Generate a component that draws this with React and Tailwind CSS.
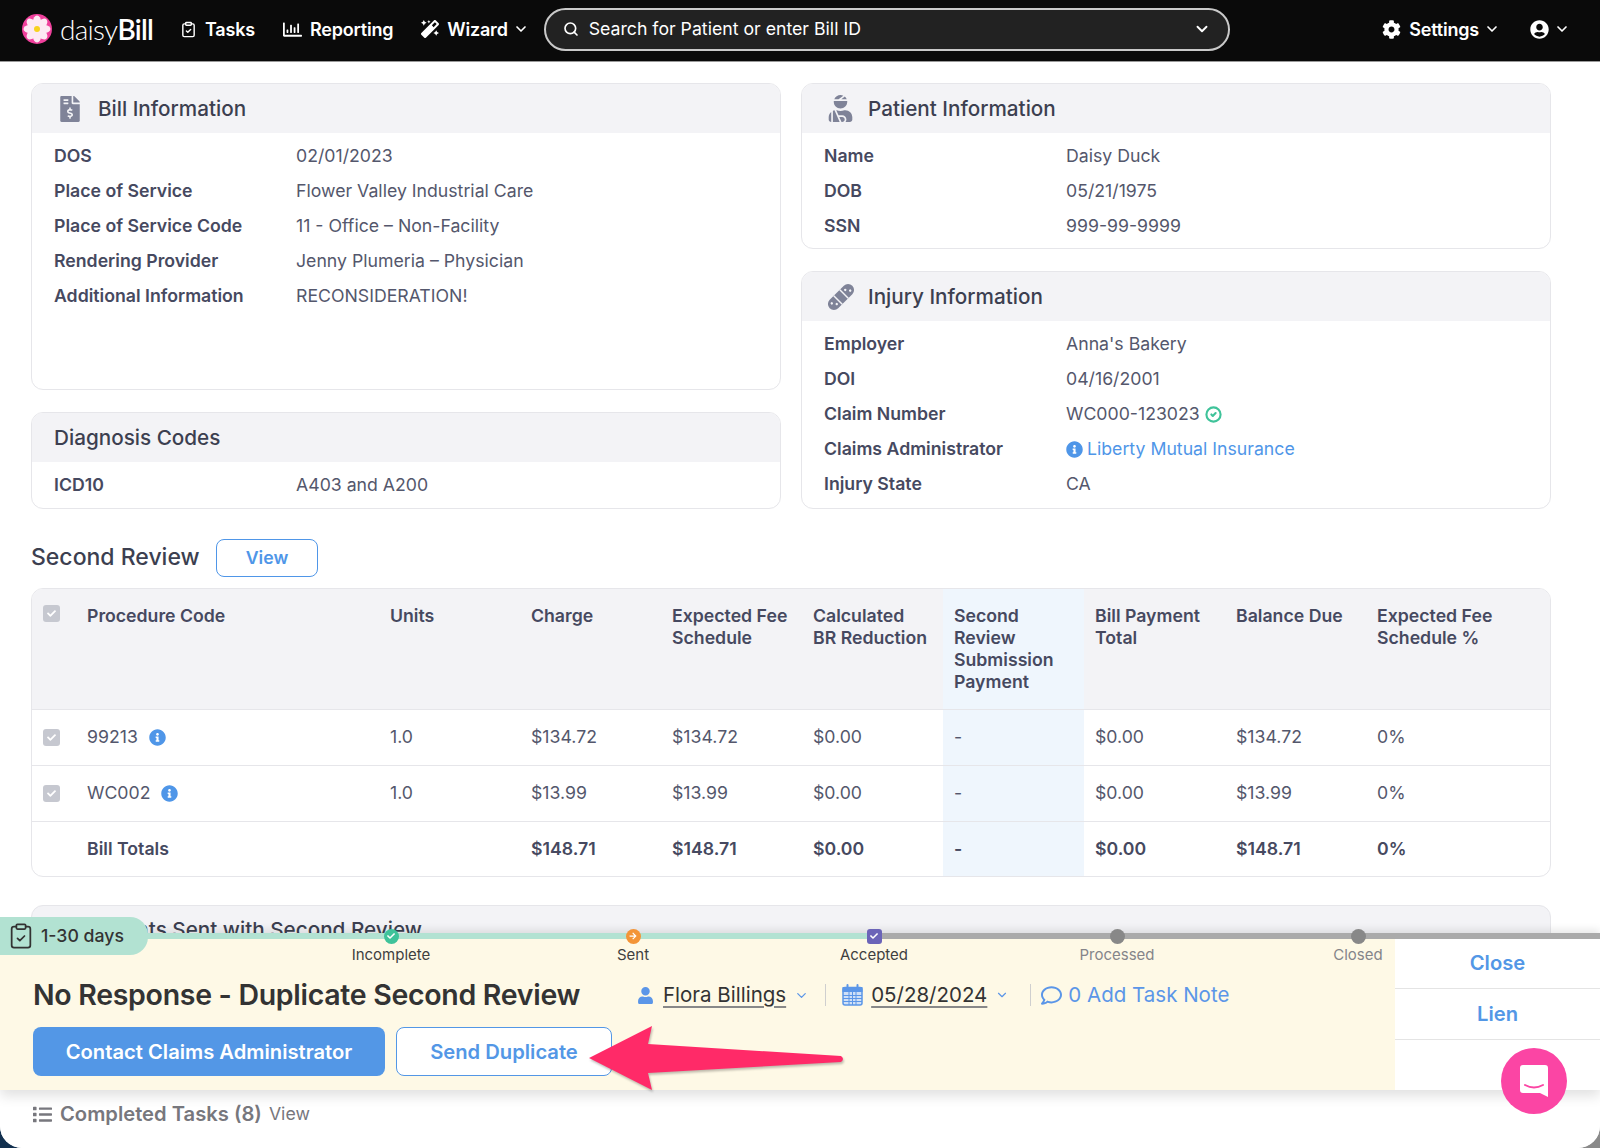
import { ChevronDown, Search, ClipboardCheck, CircleCheck } from "lucide-react";
import { FaCog, FaUserCircle, FaMagic, FaFileInvoiceDollar, FaUserInjured, FaUser, FaRegComment, FaList, FaInfoCircle, FaCheck, FaArrowRight, FaRegChartBar } from "react-icons/fa";

const billRows = [
  ["DOS", "02/01/2023"],
  ["Place of Service", "Flower Valley Industrial Care"],
  ["Place of Service Code", "11 - Office – Non-Facility"],
  ["Rendering Provider", "Jenny Plumeria – Physician"],
  ["Additional Information", "RECONSIDERATION!"],
];

const patientRows = [
  ["Name", "Daisy Duck"],
  ["DOB", "05/21/1975"],
  ["SSN", "999-99-9999"],
];

const procedureRows = [
  ["99213", "1.0", "$134.72", "$134.72", "$0.00", "-", "$0.00", "$134.72", "0%"],
  ["WC002", "1.0", "$13.99", "$13.99", "$0.00", "-", "$0.00", "$13.99", "0%"],
];

function Row({ label, children }) {
  return (
    <div className="flex h-[35px] items-center">
      <div className="w-[242px] font-semibold text-[#464960]">{label}</div>
      <div className="flex items-center text-[#54576c]">{children}</div>
    </div>
  );
}

function Card({ icon, title, className, children }) {
  return (
    <div className={"overflow-hidden rounded-xl border border-[#e6e6ea] bg-white " + className}>
      <div className="flex h-[49px] items-center bg-[#f3f3f6] px-[22px] text-[20.7px] font-medium text-[#3c3f50]">
        {icon && <div className="flex w-[44px] items-center justify-start pl-[3px] text-[#7f8398]">{icon}</div>}
        {title}
      </div>
      <div className="px-[22px] pt-[6px]">{children}</div>
    </div>
  );
}

function Check() {
  return (
    <div className="flex h-[17px] w-[17px] items-center justify-center rounded-[3px] bg-[#c6c8d0] text-white">
      <FaCheck size={9} />
    </div>
  );
}

function Logo() {
  return (
    <svg width="30" height="30" viewBox="0 0 30 30">
      <circle cx="15" cy="15" r="15" fill="#f0409c" />
      {[0, 45, 90, 135, 180, 225, 270, 315].map((a) => (
        <ellipse key={a} cx="15" cy="7.5" rx="4" ry="6" fill="#fde9f3" transform={`rotate(${a} 15 15)`} />
      ))}
      <circle cx="15" cy="15" r="3" fill="#f7d21e" />
    </svg>
  );
}

function BandageIcon() {
  return (
    <svg width="28" height="28" viewBox="0 0 28 28">
      <g transform="rotate(-45 14 14)">
        <rect x="-2" y="8" width="32" height="12" rx="6" fill="currentColor" />
        <rect x="9" y="8" width="1.5" height="12" fill="#f3f3f6" />
        <rect x="17.5" y="8" width="1.5" height="12" fill="#f3f3f6" />
        <circle cx="3" cy="12" r="1.2" fill="#f3f3f6" />
        <circle cx="6" cy="16" r="1.2" fill="#f3f3f6" />
        <circle cx="22" cy="12" r="1.2" fill="#f3f3f6" />
        <circle cx="25" cy="16" r="1.2" fill="#f3f3f6" />
      </g>
    </svg>
  );
}

function CalendarIcon() {
  return (
    <svg width="21" height="22" viewBox="0 0 21 22" className="mr-[8px] text-[#5b96e8]" stroke="currentColor" fill="none">
      <rect x="1" y="3.5" width="19" height="17.5" rx="2" fill="#cfe0f7" strokeWidth="1.5" />
      <rect x="1" y="3.5" width="19" height="4" fill="currentColor" strokeWidth="1" />
      <path d="M5.5 1v5M15.5 1v5" strokeWidth="2" strokeLinecap="round" />
      <path d="M7 8v13M10.5 8v13M14 8v13M1 11.5h19M1 14.5h19M1 17.5h19" strokeWidth="1" />
    </svg>
  );
}

function NavItem({ icon, children, caret }) {
  return (
    <div className="flex items-center gap-[8px] text-[18px] font-semibold tracking-[-0.2px] text-white">
      {icon}
      <span>{children}</span>
      {caret && <ChevronDown size={16} strokeWidth={2.5} className="-ml-[3px]" />}
    </div>
  );
}

function Milestone({ label, muted, children }) {
  return (
    <div className="flex w-[100px] flex-col items-center">
      <div className="flex h-[16px] items-center justify-center">{children}</div>
      <div className={"text-[15px] " + (muted ? "text-[#85858a]" : "text-[#3f3f3f]")}>{label}</div>
    </div>
  );
}

export default function App() {
  return (
    <div className="h-[1148px] w-[1600px] overflow-hidden bg-[linear-gradient(to_right,#12304f_50%,#8a8a8a_50%)] font-['Inter','Liberation_Sans',sans-serif] text-[17.7px]">
      <div className="relative h-[1148px] overflow-hidden rounded-b-[22px] bg-white">
        {/* top bar */}
        <div className="flex h-[62px] items-center border-b border-[#9a9a9a] bg-[#0a0a0a] pb-[3px] pl-[22px] pr-[30px]">
          <Logo />
          <div className="ml-[8px] w-[100px] font-['Lato',sans-serif] text-[28px] font-light tracking-tight text-white">
            daisy<span className="font-semibold">Bill</span>
          </div>
          <div className="ml-[20px] flex items-center gap-[28px]">
            <NavItem icon={<ClipboardCheck size={17} strokeWidth={2} />}>Tasks</NavItem>
            <NavItem icon={<FaRegChartBar size={19} />}>Reporting</NavItem>
            <NavItem icon={<FaMagic size={18} />} caret>Wizard</NavItem>
          </div>
          <div className="ml-[15px] flex h-[43px] w-[686px] items-center rounded-full border-2 border-[#c9c9c9] bg-[#222222] px-[17px] text-white">
            <Search size={16} strokeWidth={2.5} />
            <span className="ml-[10px] flex-1">Search for Patient or enter Bill ID</span>
            <ChevronDown size={18} strokeWidth={2.5} />
          </div>
          <div className="ml-auto flex items-center gap-[30px]">
            <NavItem icon={<FaCog size={19} />} caret>Settings</NavItem>
            <div className="flex items-center gap-[5px] text-white">
              <FaUserCircle size={19} />
              <ChevronDown size={16} strokeWidth={2.5} />
            </div>
          </div>
        </div>

        <div className="w-[1551px] pl-[31px] pt-[21px]">
          <div className="grid grid-cols-[750px_750px] gap-x-[20px]">
            <div className="flex flex-col gap-[22px]">
              <Card title="Bill Information" icon={<FaFileInvoiceDollar size={26} />} className="h-[307px]">
                {billRows.map((r) => (
                  <Row key={r[0]} label={r[0]}>{r[1]}</Row>
                ))}
              </Card>
              <Card title="Diagnosis Codes" className="h-[97px]">
                <Row label="ICD10">A403 and A200</Row>
              </Card>
            </div>
            <div className="flex flex-col gap-[22px]">
              <Card title="Patient Information" icon={<FaUserInjured size={27} />} className="h-[166px]">
                {patientRows.map((r) => (
                  <Row key={r[0]} label={r[0]}>{r[1]}</Row>
                ))}
              </Card>
              <Card title="Injury Information" icon={<BandageIcon />} className="h-[238px]">
                <Row label="Employer">Anna's Bakery</Row>
                <Row label="DOI">04/16/2001</Row>
                <Row label="Claim Number">
                  WC000-123023
                  <CircleCheck size={17} strokeWidth={3} className="ml-[5px] text-[#3fc39a]" />
                </Row>
                <Row label="Claims Administrator">
                  <FaInfoCircle size={17} className="mr-[4px] text-[#4f96e8]" />
                  <span className="text-[#4f96e8]">Liberty Mutual Insurance</span>
                </Row>
                <Row label="Injury State">CA</Row>
              </Card>
            </div>
          </div>

          <div className="mt-[30px] flex items-center">
            <div className="w-[185px] pb-[2px] text-[23px] font-medium text-[#3c3f50]">Second Review</div>
            <div className="flex h-[38px] w-[102px] items-center justify-center rounded-lg border border-[#4f96e8] font-semibold text-[#4f96e8]">
              View
            </div>
          </div>

          <div className="mt-[11px] overflow-hidden rounded-xl border border-[#e6e6ea] text-[#54576c]">
            <div className="grid h-[121px] grid-cols-[55px_303px_141px_141px_141px_141px_141px_141px_141px_1fr] border-b border-[#e6e6ea] bg-[#f3f3f6] font-semibold leading-[22px] text-[#464960]">
              <div className="pl-[11px] pt-[16px]"><Check /></div>
              <div className="pt-[16px]">Procedure Code</div>
              <div className="pt-[16px]">Units</div>
              <div className="pt-[16px]">Charge</div>
              <div className="pt-[16px]">Expected Fee<br />Schedule</div>
              <div className="pt-[16px]">Calculated<br />BR Reduction</div>
              <div className="-ml-[11px] mr-[11px] bg-[#eff6fd] pl-[11px] pt-[16px]">Second<br />Review<br />Submission<br />Payment</div>
              <div className="pt-[16px]">Bill Payment<br />Total</div>
              <div className="pt-[16px]">Balance Due</div>
              <div className="pt-[16px]">Expected Fee<br />Schedule %</div>
            </div>
            {procedureRows.map((r) => (
              <div key={r[0]} className="grid h-[56px] grid-cols-[55px_303px_141px_141px_141px_141px_141px_141px_141px_1fr] items-stretch border-b border-[#e6e6ea]">
                <div className="flex items-center pl-[11px]"><Check /></div>
                <div className="flex items-center gap-[11px]">
                  {r[0]}
                  <FaInfoCircle size={17} className="text-[#4f96e8]" />
                </div>
                {r.slice(1).map((v, i) => (
                  <div key={i} className={"flex items-center " + (i === 4 ? "-ml-[11px] mr-[11px] bg-[#eff6fd] pl-[11px]" : "")}>{v}</div>
                ))}
              </div>
            ))}
            <div className="grid h-[54px] grid-cols-[55px_303px_141px_141px_141px_141px_141px_141px_141px_1fr] items-stretch font-semibold text-[#464960]">
              <div />
              <div className="flex items-center">Bill Totals</div>
              <div />
              <div className="flex items-center">$148.71</div>
              <div className="flex items-center">$148.71</div>
              <div className="flex items-center">$0.00</div>
              <div className="-ml-[11px] mr-[11px] flex items-center bg-[#eff6fd] pl-[11px]">-</div>
              <div className="flex items-center">$0.00</div>
              <div className="flex items-center">$148.71</div>
              <div className="flex items-center">0%</div>
            </div>
          </div>

          <div className="mt-[28px] flex h-[49px] items-center rounded-t-xl border border-[#e6e6ea] bg-[#f3f3f6] px-[22px] text-[20.7px] font-medium text-[#3c3f50]">
            Documents Sent with Second Review
          </div>
        </div>

        {/* task bar pinned over the page */}
        <div className="absolute inset-x-0 bottom-0 h-[215px] bg-white shadow-[0_-3px_8px_rgba(0,0,0,0.1)]">
          <div className="absolute -top-[16px] left-0 z-10 flex h-[38px] w-[148px] items-center gap-[6px] rounded-r-[18px] bg-[#b2e2d2] pl-[7px] text-[#333]">
            <ClipboardCheck size={28} strokeWidth={1.5} />
            <span className="font-medium">1-30 days</span>
          </div>
          <div className="flex h-[6px]">
            <div className="w-[868px] bg-[#b2e2d2]" />
            <div className="flex-1 bg-[#aaaaaa]" />
          </div>
          <div className="flex h-[151px] shadow-[0_6px_12px_rgba(0,0,0,0.12)]">
            <div className="relative w-[1395px] bg-[#fef9e6] pl-[33px]">
              <div className="absolute -top-[11px] left-[341px] flex">
                <Milestone label="Incomplete">
                  <span className="flex h-[15px] w-[15px] items-center justify-center rounded-full bg-[#3fc39a] text-white"><FaCheck size={8} /></span>
                </Milestone>
                <div className="w-[142px]" />
                <Milestone label="Sent">
                  <span className="flex h-[15px] w-[15px] items-center justify-center rounded-full bg-[#f39437] text-white"><FaArrowRight size={8} /></span>
                </Milestone>
                <div className="w-[141px]" />
                <Milestone label="Accepted">
                  <span className="flex h-[15px] w-[15px] items-center justify-center rounded-[3px] bg-[#6b64b8] text-white"><FaCheck size={8} /></span>
                </Milestone>
                <div className="w-[143px]" />
                <Milestone label="Processed" muted>
                  <span className="h-[15px] w-[15px] rounded-full bg-[#888888]" />
                </Milestone>
                <div className="w-[141px]" />
                <Milestone label="Closed" muted>
                  <span className="h-[15px] w-[15px] rounded-full bg-[#888888]" />
                </Milestone>
              </div>
              <div className="flex h-[88px] items-center pt-[24px]">
                <div className="w-[604px] text-[28.5px] font-semibold tracking-[-0.3px] text-[#333333]">No Response - Duplicate Second Review</div>
                <div className="flex items-center text-[20.5px] text-[#333333]">
                  <FaUser size={17} className="mr-[9px] text-[#5b96e8]" />
                  <span className="underline decoration-[#888] underline-offset-4">Flora Billings</span>
                  <ChevronDown size={15} className="ml-[8px] text-[#5b96e8]" />
                  <div className="ml-[16px] mr-[16px] h-[22px] w-px bg-[#cfcfcf]" />
                  <CalendarIcon />
                  <span className="underline decoration-[#888] underline-offset-4">05/28/2024</span>
                  <ChevronDown size={14} className="ml-[8px] text-[#5b96e8]" />
                  <div className="ml-[21px] mr-[10px] h-[22px] w-px bg-[#cfcfcf]" />
                  <FaRegComment size={21} className="mr-[6px] text-[#5b96e8]" />
                  <span className="text-[#5b96e8]">0 Add Task Note</span>
                </div>
              </div>
              <div className="flex gap-[11px]">
                <div className="flex h-[49px] w-[352px] items-center justify-center rounded-lg bg-[#5397e6] pt-[1px] text-[20.2px] font-semibold text-white">
                  Contact Claims Administrator
                </div>
                <div className="flex h-[49px] w-[216px] items-center justify-center rounded-lg border border-[#5397e6] bg-white pt-[1px] text-[20.2px] font-semibold text-[#5397e6]">
                  Send Duplicate
                </div>
              </div>
            </div>
            <div className="flex-1 bg-white text-[20.2px] font-semibold text-[#5397e6]">
              <div className="flex h-[50px] items-center justify-center border-b border-[#e4e4e4]">Close</div>
              <div className="flex h-[51px] items-center justify-center border-b border-[#e4e4e4]">Lien</div>
            </div>
          </div>
          <div className="flex h-[48px] items-center pl-[33px] text-[#77777d]">
            <FaList size={19} className="mr-[8px]" />
            <span className="text-[20.2px] font-semibold">Completed Tasks (8)</span>
            <span className="ml-[7px]">View</span>
          </div>
        </div>

        {/* annotation arrow */}
        <svg className="absolute left-[585px] top-[1022px] drop-shadow-[1px_2px_1px_rgba(0,0,0,0.25)]" width="265" height="72" viewBox="0 0 265 72">
          <path d="M4 36 L67 4 L63 22 L256 34 Q260 37 256 40 L63 51 L67 68 Z" fill="#ff2a68" />
        </svg>

        {/* chat launcher */}
        <div className="absolute left-[1501px] top-[1048px] flex h-[66px] w-[66px] items-center justify-center rounded-full bg-[#fb45a4]">
          <svg width="30" height="34" viewBox="0 0 30 34">
            <path d="M4 1 H26 a3 3 0 0 1 3 3 V33 L21 29 H4 a3 3 0 0 1 -3 -3 V4 a3 3 0 0 1 3 -3 Z" fill="#fff" />
            <path d="M6 21 Q15 26 24 21" stroke="#fb45a4" strokeWidth="2" fill="none" strokeLinecap="round" />
          </svg>
        </div>
      </div>
    </div>
  );
}
